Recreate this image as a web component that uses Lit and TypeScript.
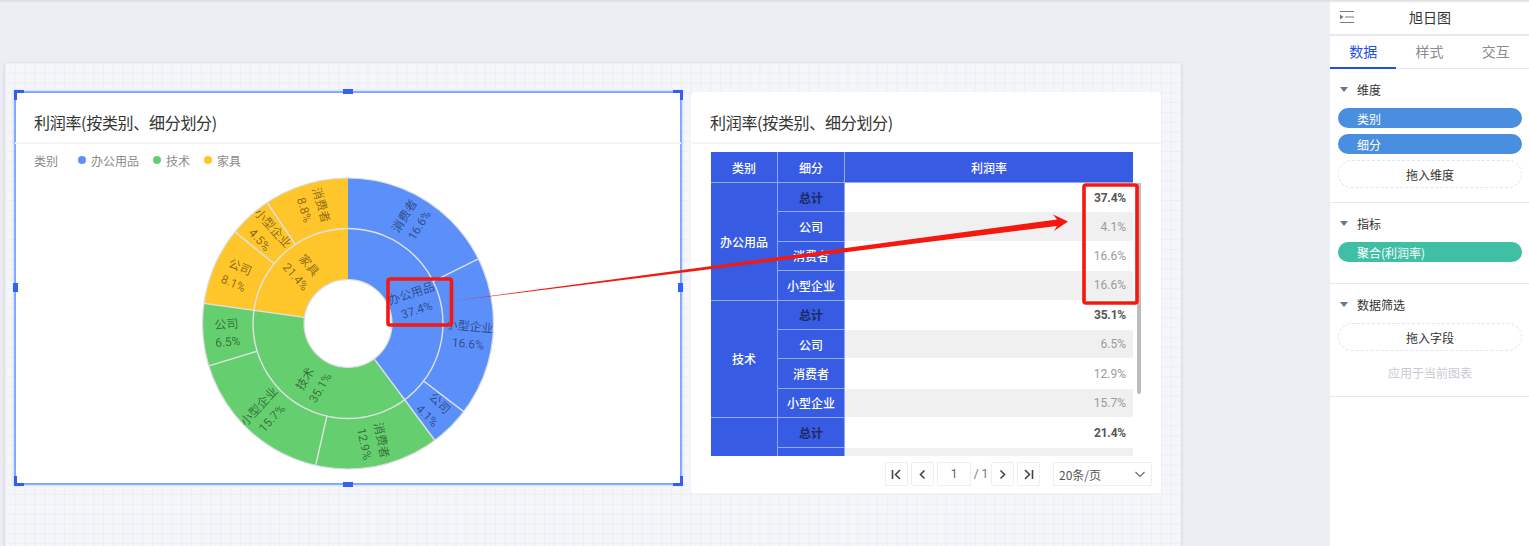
import { LitElement, html, css, svg } from "lit";
import { customElement } from "lit/decorators.js";

const CX = 333, CY = 147.5, R0 = 44, R1 = 95, R2 = 145.5;
const BLUE = "#5b8ff9", GREEN = "#65cf6f", YELLOW = "#ffc62c";

interface Leaf { n: string; v: number }
interface Group { n: string; v: number; c: string; kids: Leaf[] }

const DATA: Group[] = [
  { n: "办公用品", v: 37.4, c: BLUE, kids: [{ n: "消费者", v: 16.6 }, { n: "小型企业", v: 16.6 }, { n: "公司", v: 4.1 }] },
  { n: "技术", v: 35.1, c: GREEN, kids: [{ n: "消费者", v: 12.9 }, { n: "小型企业", v: 15.7 }, { n: "公司", v: 6.5 }] },
  { n: "家具", v: 21.4, c: YELLOW, kids: [{ n: "公司", v: 8.1 }, { n: "小型企业", v: 4.5 }, { n: "消费者", v: 8.8 }] },
];
const TOTAL = DATA.reduce((s, g) => s + g.v, 0);

const pt = (r: number, a: number) => {
  const t = (a * Math.PI) / 180;
  return [CX + r * Math.sin(t), CY - r * Math.cos(t)];
};
const arc = (ri: number, ro: number, a: number, b: number) => {
  const [x1, y1] = pt(ro, a), [x2, y2] = pt(ro, b), [x3, y3] = pt(ri, b), [x4, y4] = pt(ri, a);
  const l = b - a > 180 ? 1 : 0;
  return `M${x1} ${y1}A${ro} ${ro} 0 ${l} 1 ${x2} ${y2}L${x3} ${y3}A${ri} ${ri} 0 ${l} 0 ${x4} ${y4}Z`;
};
const label = (r: number, a: number, n: string, v: number) => {
  const [x, y] = pt(r, a);
  let rot = a - 90;
  if (rot > 90) rot -= 180;
  return svg`<g transform="translate(${x} ${y}) rotate(${rot})">
    <text class="lb" text-anchor="middle" y="-4.5">${n}</text>
    <text class="lb" text-anchor="middle" y="13">${v}%</text>
  </g>`;
};
const radial = (r1: number, r2: number, a: number) => {
  const [x1, y1] = pt(r1, a), [x2, y2] = pt(r2, a);
  return svg`<line class="sep" x1=${x1} y1=${y1} x2=${x2} y2=${y2}></line>`;
};

function sunburst() {
  const fills: unknown[] = [], seps: unknown[] = [], labels: unknown[] = [];
  let a = 0;
  DATA.forEach((g) => {
    const span = (g.v / TOTAL) * 360;
    fills.push(svg`<path d=${arc(R0, R2, a, a + span)} fill=${g.c}></path>`);
    if (a > 0) seps.push(radial(R0, R2, a));
    labels.push(label((R0 + R1) / 2, a + span / 2, g.n, g.v));
    let b = a;
    g.kids.forEach((k, i) => {
      const s = (k.v / TOTAL) * 360;
      if (i > 0) seps.push(radial(R1, R2, b));
      labels.push(label((R1 + R2) / 2 + 1, b + s / 2, k.n, k.v));
      b += s;
    });
    a += span;
  });
  return svg`${fills}${seps}
    <circle class="sep" cx=${CX} cy=${CY} r=${R1} fill="none"></circle>
    <circle class="edge" cx=${CX} cy=${CY} r=${R0} fill="none"></circle>
    <circle class="edge" cx=${CX} cy=${CY} r=${R2} fill="none"></circle>
    ${labels}`;
}

const ROWS: { g: string; rows: [string, string, boolean][] }[] = [
  { g: "办公用品", rows: [["总计", "37.4%", true], ["公司", "4.1%", false], ["消费者", "16.6%", false], ["小型企业", "16.6%", false]] },
  { g: "技术", rows: [["总计", "35.1%", true], ["公司", "6.5%", false], ["消费者", "12.9%", false], ["小型企业", "15.7%", false]] },
  { g: "", rows: [["总计", "21.4%", true]] },
];

@customElement("app-root")
export class AppRoot extends LitElement {
  static styles = css`
    :host {
      display: block; position: relative; width: 1529px; height: 546px; overflow: hidden;
      background: #eceef3; font-family: "Noto Sans CJK SC", "Liberation Sans", sans-serif; color: #333;
    }
    .page { display: flex; height: 546px; }
    .main { width: 1330px; padding: 63px 0 0 5px; box-sizing: border-box; flex: none; }
    .topshade { position: absolute; left: 0; top: 0; right: 0; height: 3px; background: linear-gradient(#d9d9d9, #eceef300); z-index: 4; }
    .canvas {
      width: 1176px; height: 483px; box-sizing: border-box; padding: 29px 10px 0;
      display: flex; gap: 10px; align-items: flex-start;
      background-color: #f5f6fa;
      background-image: linear-gradient(#eceef3 1px, transparent 1px), linear-gradient(90deg, #eceef3 1px, transparent 1px);
      background-size: 9.8px 9.8px;
      background-position: 0 -0.2px;
      box-shadow: 0 1px 4px rgba(0, 0, 0, 0.14);
    }
    .card { background: #fff; flex: none; box-sizing: border-box; }
    .card.a { width: 666px; height: 392px; position: relative; box-shadow: inset 0 0 0 1px #7ba2ff, 0 0 0 1px #8fb1ff, 0 0 2px 2px #cfdfff; }
    .card.b { width: 470px; height: 401px; border-radius: 4px; }
    .title { height: 52px; box-sizing: border-box; border-bottom: 2px solid #f3f3f6; padding: 19px 0 0 19px; font-size: 16px; line-height: 22px; color: #333; letter-spacing: -0.3px; }
    .legend { display: flex; align-items: center; height: 32px; padding-left: 19px; font-size: 12px; color: #8a8a8a; }
    .legend .t { margin-right: 20px; }
    .legend .dot { width: 8px; height: 8px; border-radius: 50%; margin-right: 5px; }
    .legend .i { margin-right: 14px; }
    .chart { display: block; width: 664px; height: 306px; }
    .lb { font-family: "Roboto", "Noto Sans CJK SC", sans-serif; font-size: 12px; fill: rgba(0, 0, 0, 0.48); }
    .sep { stroke: #dfe2e4; stroke-width: 1.4; }
    .edge { stroke: #d9dcdf; stroke-width: 1.2; }
    .h { position: absolute; background: #2f62f5; }
    .h.t, .h.b { width: 10px; height: 5px; left: 328px; }
    .h.t { top: -3px; } .h.b { bottom: -3px; }
    .h.l, .h.r { width: 5px; height: 9px; top: 191px; }
    .h.l { left: -2px; } .h.r { right: -2px; }
    .c { position: absolute; width: 10px; height: 10px; border: 0 solid #2f5ff5; box-sizing: border-box; }
    .c.tl { left: -1px; top: -2px; border-width: 3px 0 0 3px; }
    .c.tr { right: -2px; top: -2px; border-width: 3px 3px 0 0; }
    .c.bl { left: -1px; bottom: -2px; border-width: 0 0 3px 3px; }
    .c.br { right: -2px; bottom: -2px; border-width: 0 3px 3px 0; }

    .tablewrap { position: relative; margin: 8px 0 0 20px; width: 442px; height: 304px; overflow: hidden; }
    .tbl { display: grid; grid-template-columns: 67px 67px 288px; grid-template-rows: 31px; grid-auto-rows: 29.4px; width: 422px; font-size: 12px; }
    .tbl > div { display: flex; align-items: center; justify-content: center; box-sizing: border-box; }
    .hd, .gp, .sb { background: #375be2; color: #fff; border-right: 1px solid #93a9f4; border-bottom: 1px solid #93a9f4; font-weight: 500; }
    .tbl .hd3 { border-right: 0; }
    .gp.span { grid-row: span 4; }
    .sb.total { color: #1d2b63; font-weight: 700; }
    .tbl .val { justify-content: flex-end; padding-right: 7px; font-size: 12px; color: #9a9a9a; font-family: "Roboto", sans-serif; }
    .val.alt { background: #f0f0f0; border-bottom: 1px solid #fff; }
    .tbl .val.total { font-weight: 700; color: #555; letter-spacing: -0.2px; }
    .scroll { position: absolute; left: 426px; top: 31px; width: 4px; height: 211px; background: #bcbcbc; border-radius: 0 0 3px 3px; }

    .pager { display: flex; align-items: center; height: 24px; margin: 6px 0 0 194px; font-size: 12px; color: #666; }
    .pbtn { width: 23px; height: 24px; box-sizing: border-box; border: 1px solid #eceef1; border-radius: 2px; display: flex; align-items: center; justify-content: center; margin-right: 3px; }
    .pinput { width: 34px; height: 24px; box-sizing: border-box; border: 1px solid #eceef1; border-radius: 2px; text-align: center; line-height: 22px; color: #666; font-family: "Roboto", sans-serif; }
    .pof { width: 20px; text-align: center; color: #777; font-family: "Roboto", sans-serif; }
    .psel { width: 99px; height: 24px; box-sizing: border-box; border: 1px solid #eceef1; border-radius: 2px; margin-left: 10px; display: flex; align-items: center; justify-content: space-between; padding: 0 5px 0 5px; font-size: 12px; color: #555; }

    .panel { width: 199px; flex: none; background: #fff; height: 546px; box-sizing: border-box; font-size: 12px; }
    .phead { height: 36px; border-bottom: 2px solid #e8e9f0; box-sizing: border-box; display: flex; align-items: center; padding-left: 9px; position: relative; }
    .phead .name { position: absolute; left: 1px; right: 0; text-align: center; font-size: 14px; color: #333; }
    .tabs { display: flex; height: 33px; border-bottom: 1px solid #e8e9f0; box-sizing: border-box; font-size: 14px; color: #8a8a8f; }
    .tab { width: 66.6px; text-align: center; line-height: 31px; box-sizing: border-box; }
    .tab.on { color: #1f4fe8; border-bottom: 2px solid #1f4fe8; height: 33px; }
    .sec { border-bottom: 1px solid #e8e9f0; padding: 11px 7px 0 8px; box-sizing: border-box; }
    .sec.s1 { height: 134px; }
    .sec.s2 { height: 81px; }
    .sec.s3 { height: 113px; }
    .shead { display: flex; align-items: center; height: 18px; color: #333; gap: 9px; padding-left: 2px; margin-bottom: 10px; }
    .tri { width: 0; height: 0; border: 4px solid transparent; border-top: 5px solid #6d7391; border-bottom: 0; }
    .pill { height: 20px; border-radius: 10px; color: #fff; line-height: 21px; padding-left: 19px; margin-bottom: 6px; }
    .pill.blue { background: #4a8ee0; }
    .pill.teal { background: #3fc0a5; }
    .drop { height: 28px; border-radius: 14px; border: 1px dashed #e4e5ea; box-sizing: border-box; text-align: center; line-height: 27px; color: #333; }
    .hint { text-align: center; color: #c9cad2; margin-top: 13px; line-height: 18px; }
    .anno { position: absolute; left: 0; top: 0; width: 1529px; height: 546px; pointer-events: none; z-index: 3; }
  `;

  private pageIcon(d: string) {
    return html`<svg width="13" height="13" viewBox="0 0 13 13"><path d=${d} fill="none" stroke="#444" stroke-width="1.6"></path></svg>`;
  }

  render() {
    return html`
      <div class="topshade"></div>
      <div class="page">
        <div class="main">
          <div class="canvas">
            <div class="card a">
              <div class="title">利润率(按类别、细分划分)</div>
              <div class="legend">
                <span class="t">类别</span>
                <span class="dot" style="background:${BLUE}"></span><span class="i">办公用品</span>
                <span class="dot" style="background:${GREEN}"></span><span class="i">技术</span>
                <span class="dot" style="background:${YELLOW}"></span><span class="i">家具</span>
              </div>
              <svg class="chart" viewBox="0 0 664 306">${sunburst()}</svg>
              <i class="c tl"></i><i class="c tr"></i><i class="c bl"></i><i class="c br"></i>
              <i class="h t"></i><i class="h b"></i><i class="h l"></i><i class="h r"></i>
            </div>
            <div class="card b">
              <div class="title">利润率(按类别、细分划分)</div>
              <div class="tablewrap">
                <div class="tbl">
                  <div class="hd">类别</div><div class="hd">细分</div><div class="hd hd3">利润率</div>
                  ${ROWS.map((g) => html`
                    <div class="gp span">${g.g}</div>
                    ${g.rows.map((r, i) => html`
                      <div class="sb ${r[2] ? "total" : ""}">${r[0]}</div>
                      <div class="val ${r[2] ? "total" : ""} ${i % 2 ? "alt" : ""}">${r[1]}</div>
                    `)}
                  `)}
                  <div class="sb"></div><div class="val alt"></div>
                </div>
                <div class="scroll"></div>
              </div>
              <div class="pager">
                <div class="pbtn">${this.pageIcon("M2.5 2v9M10 2L5.5 6.5 10 11")}</div>
                <div class="pbtn">${this.pageIcon("M8.5 2.5L4.5 6.5 8.5 10.5")}</div>
                <div class="pinput">1</div>
                <div class="pof">/ 1</div>
                <div class="pbtn">${this.pageIcon("M4.5 2.5L8.5 6.5 4.5 10.5")}</div>
                <div class="pbtn">${this.pageIcon("M10.5 2v9M3 2L7.5 6.5 3 11")}</div>
                <div class="psel"><span>20条/页</span>
                  <svg width="12" height="12" viewBox="0 0 12 12"><path d="M1.5 4L6 8.5 10.5 4" fill="none" stroke="#666" stroke-width="1.1"></path></svg>
                </div>
              </div>
            </div>
          </div>
        </div>
        <div class="panel">
          <div class="phead">
            <svg width="16" height="14" viewBox="0 0 16 14"><path d="M1 1.5h14M6 7h9M1 12.5h14" stroke="#777b88" stroke-width="1.2" fill="none"></path><path d="M1 4.5L4.5 7 1 9.5z" fill="#777b88"></path></svg>
            <span class="name">旭日图</span>
          </div>
          <div class="tabs"><div class="tab on">数据</div><div class="tab">样式</div><div class="tab">交互</div></div>
          <div class="sec s1">
            <div class="shead"><i class="tri"></i>维度</div>
            <div class="pill blue">类别</div>
            <div class="pill blue">细分</div>
            <div class="drop">拖入维度</div>
          </div>
          <div class="sec s2">
            <div class="shead"><i class="tri"></i>指标</div>
            <div class="pill teal">聚合(利润率)</div>
          </div>
          <div class="sec s3">
            <div class="shead"><i class="tri"></i>数据筛选</div>
            <div class="drop">拖入字段</div>
            <div class="hint">应用于当前图表</div>
          </div>
        </div>
      </div>
      <svg class="anno" viewBox="0 0 1529 546">
        <rect x="388" y="279" width="63.5" height="46" rx="2" fill="none" stroke="#f5180f" stroke-width="3.6"></rect>
        <rect x="1084" y="185" width="53" height="118" rx="2" fill="none" stroke="#f5180f" stroke-width="3.6"></rect>
        <polygon points="453,301 1057,219.5 1053,214.5 1068,221.5 1054,231 1057,226" fill="#f5180f"></polygon>
      </svg>
    `;
  }
}
